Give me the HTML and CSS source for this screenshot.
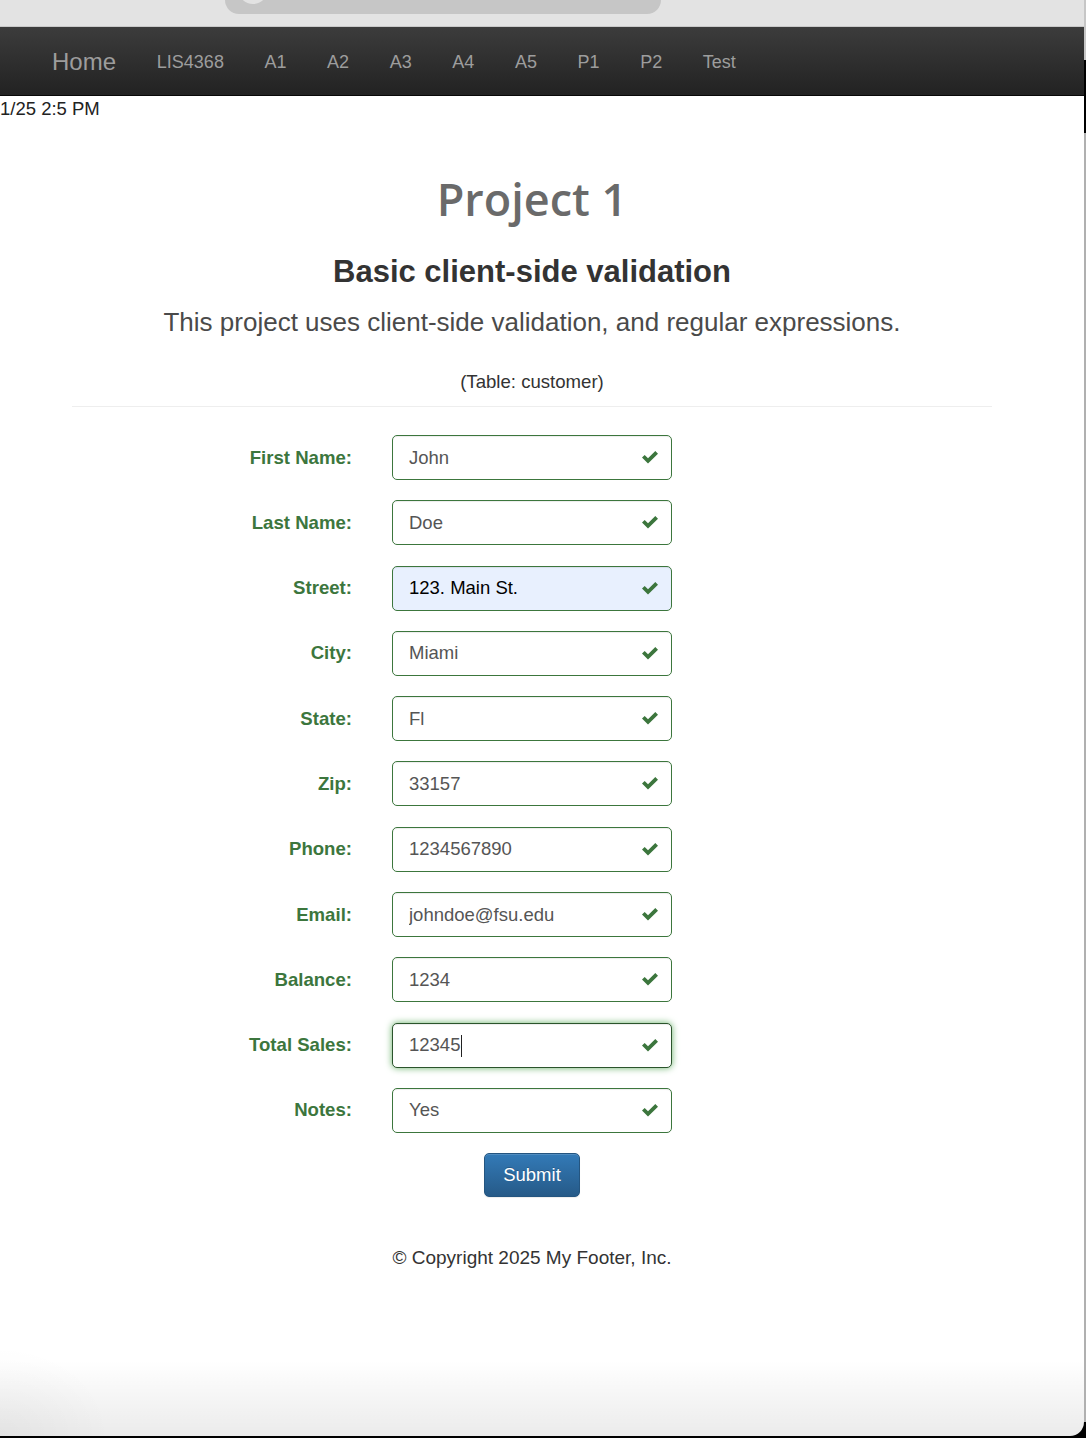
FILE: index.html
```html
<!DOCTYPE html>
<html lang="en">
<head>
<meta charset="utf-8">
<title>Project 1</title>
<link rel="stylesheet" href="styles.css">
</head>
<body>
<div class="screen">
  <div class="window">
    <div class="chrome"><div class="pill"></div></div>
    <nav class="navbar">
      <a class="brand" href="#">Home</a>
      <a class="nav-link" href="#">LIS4368</a>
      <a class="nav-link" href="#">A1</a>
      <a class="nav-link" href="#">A2</a>
      <a class="nav-link" href="#">A3</a>
      <a class="nav-link" href="#">A4</a>
      <a class="nav-link" href="#">A5</a>
      <a class="nav-link" href="#">P1</a>
      <a class="nav-link" href="#">P2</a>
      <a class="nav-link" href="#">Test</a>
    </nav>
    <div class="date">1/25 2:5 PM</div>
    <main class="container">
      <h1 class="title">Project 1</h1>
      <h3 class="subtitle">Basic client-side validation</h3>
      <p class="lead">This project uses client-side validation, and regular expressions.</p>
      <p class="table-note">(Table: customer)</p>
      <hr class="rule">
      <form class="form">
        <label class="label">First Name:</label>
        <div class="field"><input class="input" type="text" value="John"><svg class="ok" viewBox="0 0 16 13"><polygon points="0,6.6 2.7,3.9 6,7.2 13.3,0 16,2.7 6,12.6"/></svg></div>
        <label class="label">Last Name:</label>
        <div class="field"><input class="input" type="text" value="Doe"><svg class="ok" viewBox="0 0 16 13"><polygon points="0,6.6 2.7,3.9 6,7.2 13.3,0 16,2.7 6,12.6"/></svg></div>
        <label class="label">Street:</label>
        <div class="field"><input class="input input-autofill" type="text" value="123. Main St."><svg class="ok" viewBox="0 0 16 13"><polygon points="0,6.6 2.7,3.9 6,7.2 13.3,0 16,2.7 6,12.6"/></svg></div>
        <label class="label">City:</label>
        <div class="field"><input class="input" type="text" value="Miami"><svg class="ok" viewBox="0 0 16 13"><polygon points="0,6.6 2.7,3.9 6,7.2 13.3,0 16,2.7 6,12.6"/></svg></div>
        <label class="label">State:</label>
        <div class="field"><input class="input" type="text" value="Fl"><svg class="ok" viewBox="0 0 16 13"><polygon points="0,6.6 2.7,3.9 6,7.2 13.3,0 16,2.7 6,12.6"/></svg></div>
        <label class="label">Zip:</label>
        <div class="field"><input class="input" type="text" value="33157"><svg class="ok" viewBox="0 0 16 13"><polygon points="0,6.6 2.7,3.9 6,7.2 13.3,0 16,2.7 6,12.6"/></svg></div>
        <label class="label">Phone:</label>
        <div class="field"><input class="input" type="text" value="1234567890"><svg class="ok" viewBox="0 0 16 13"><polygon points="0,6.6 2.7,3.9 6,7.2 13.3,0 16,2.7 6,12.6"/></svg></div>
        <label class="label">Email:</label>
        <div class="field"><input class="input" type="text" value="johndoe@fsu.edu"><svg class="ok" viewBox="0 0 16 13"><polygon points="0,6.6 2.7,3.9 6,7.2 13.3,0 16,2.7 6,12.6"/></svg></div>
        <label class="label">Balance:</label>
        <div class="field"><input class="input" type="text" value="1234"><svg class="ok" viewBox="0 0 16 13"><polygon points="0,6.6 2.7,3.9 6,7.2 13.3,0 16,2.7 6,12.6"/></svg></div>
        <label class="label">Total Sales:</label>
        <div class="field"><input class="input input-focus" type="text" value="12345"><span class="caret"></span><svg class="ok" viewBox="0 0 16 13"><polygon points="0,6.6 2.7,3.9 6,7.2 13.3,0 16,2.7 6,12.6"/></svg></div>
        <label class="label">Notes:</label>
        <div class="field"><input class="input" type="text" value="Yes"><svg class="ok" viewBox="0 0 16 13"><polygon points="0,6.6 2.7,3.9 6,7.2 13.3,0 16,2.7 6,12.6"/></svg></div>
        <div class="spacer"></div>
        <button class="btn" type="button">Submit</button>
      </form>
      <footer class="footer">© Copyright 2025 My Footer, Inc.</footer>
    </main>
  </div>
  <div class="edge"></div>
</div>
</body>
</html>
```
FILE: styles.css
```css
* { box-sizing: border-box; }
html, body { margin: 0; padding: 0; }
body {
  background: #000;
  font-family: "Liberation Sans", Arial, sans-serif;
  color: #333;
}
.screen {
  display: flex;
  width: 1086px;
  height: 1438px;
  background: #000;
}
.window {
  width: 1084px;
  height: 1436px;
  border-bottom-right-radius: 14px;
  overflow: hidden;
  background:
    radial-gradient(110px 90px at 0 100%, rgba(0,0,0,0.04), rgba(0,0,0,0)),
    linear-gradient(to bottom, rgba(0,0,0,0) 1360px, rgba(0,0,0,0.08) 100%),
    #fff;
}
.edge {
  width: 2px;
  height: 1438px;
  background: linear-gradient(to bottom, #c6c6c6 0, #c6c6c6 60px, #000 60px, #000 133px, #b0b0b0 133px, #b0b0b0 1422px, #000 1422px);
}
.chrome {
  height: 27px;
  background: #e3e3e3;
  border-bottom: 1px solid #c9c9c9;
  display: flex;
}
.pill {
  position: relative;
  margin-left: 225px;
  width: 436px;
  height: 14px;
  background: #c6c6c6;
  border-radius: 0 0 14px 14px;
  overflow: hidden;
}
.pill::before {
  content: "";
  position: absolute;
  left: 13px;
  top: -26px;
  width: 30px;
  height: 30px;
  border-radius: 50%;
  background: #e2e2e2;
}
.navbar {
  height: 69px;
  display: flex;
  align-items: center;
  padding-left: 52px;
  padding-top: 2px;
  background: linear-gradient(to bottom, #3c3c3c 0, #222 100%);
  border-bottom: 1px solid #080808;
}
.navbar a { text-decoration: none; color: #9d9d9d; }
.brand {
  font-size: 24px;
  margin-right: 20.5px;
}
.nav-link {
  font-size: 18px;
  padding: 0 20.3px;
}
.date {
  font-size: 18.5px;
  line-height: 26px;
  color: #222;
}
.container {
  width: 920px;
  margin-left: 72px;
  display: flex;
  flex-direction: column;
}
.title {
  margin: 51px 0 0;
  text-align: center;
  font-family: "Open Sans", "DejaVu Sans", sans-serif;
  font-weight: 600;
  font-size: 45px;
  line-height: 52px;
  color: #6a6a6a;
}
.subtitle {
  margin: 30px 0 0;
  text-align: center;
  font-size: 31px;
  line-height: 33px;
  font-weight: 700;
  color: #333;
}
.lead {
  margin: 15px 0 0;
  text-align: center;
  font-size: 26px;
  line-height: 38px;
  font-weight: 300;
  color: #4a4a4a;
}
.table-note {
  margin: 28px 0 0;
  text-align: center;
  font-size: 18.6px;
  line-height: 26px;
  color: #333;
}
.rule {
  margin: 11px 0 0;
  border: 0;
  border-top: 1px solid #eee;
  height: 0;
}
.form {
  margin-top: 28px;
  display: grid;
  grid-template-columns: 280px 280px;
  column-gap: 40px;
  row-gap: 20.3px;
  align-items: center;
}
.label {
  text-align: right;
  font-size: 18.6px;
  font-weight: 700;
  color: #3c763d;
}
.field {
  position: relative;
  height: 45px;
}
.input {
  width: 280px;
  height: 45px;
  padding: 0 40px 0 16px;
  border: 1px solid #3c763d;
  border-radius: 5px;
  background: #fff;
  font-family: "Liberation Sans", Arial, sans-serif;
  font-size: 18.5px;
  color: #555;
  outline: none;
  box-shadow: inset 0 1px 1px rgba(0,0,0,0.075);
}
.input-autofill {
  background: #e8f0fe;
  color: #000;
}
.input-focus {
  border-color: #2b542c;
  box-shadow: inset 0 1px 1px rgba(0,0,0,0.075), 0 0 7px #67b168;
}
.caret {
  position: absolute;
  left: 69px;
  top: 12px;
  width: 1px;
  height: 22px;
  background: #222;
}
.ok {
  position: absolute;
  right: 14px;
  top: 16px;
  width: 16px;
  height: 13px;
  fill: #3c763d;
}
.spacer { height: 1px; }
.btn {
  justify-self: center;
  height: 44px;
  padding: 0 18px;
  font-family: "Liberation Sans", Arial, sans-serif;
  font-size: 18.5px;
  color: #fff;
  border: 1px solid #245580;
  border-radius: 5px;
  background: linear-gradient(to bottom, #337ab7 0, #265a88 100%);
  text-shadow: 0 -1px 0 rgba(0,0,0,0.2);
  box-shadow: inset 0 1px 0 rgba(255,255,255,0.15), 0 1px 1px rgba(0,0,0,0.075);
}
.footer {
  margin-top: 48px;
  text-align: center;
  font-size: 19px;
  line-height: 26px;
  color: #333;
}
```
